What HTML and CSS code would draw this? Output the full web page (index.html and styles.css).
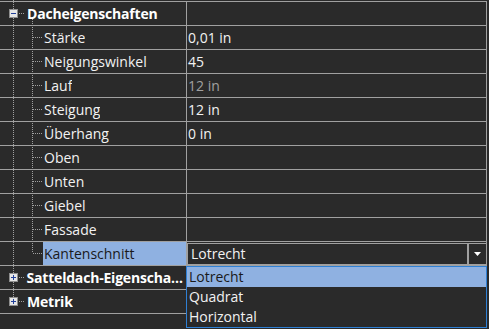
FILE: index.html
```html
<!DOCTYPE html>
<html lang="de">
<head>
    <meta charset="UTF-8">
    <title>Eigenschaften</title>
    <link rel="stylesheet" href="styles.css">
</head>
<body>
    <div class="grid">
        <div class="row group">
            <div class="name">
                <svg class="box" width="9" height="9" viewBox="0 0 9 9"><rect x=".5" y=".5" width="8" height="8" fill="#e6e6e6" stroke="#8e8e8e"/><path d="M2 4.5h5" stroke="#22409a"/></svg>
                <span class="twig short"></span>
                <span class="label">Dacheigenschaften</span>
            </div>
            <div class="value"></div>
        </div>
        <div class="row">
            <div class="name"><span class="twig"></span><span class="label">Stärke</span></div>
            <div class="value">0,01 in</div>
        </div>
        <div class="row">
            <div class="name"><span class="twig"></span><span class="label">Neigungswinkel</span></div>
            <div class="value">45</div>
        </div>
        <div class="row">
            <div class="name"><span class="twig"></span><span class="label">Lauf</span></div>
            <div class="value readonly">12 in</div>
        </div>
        <div class="row">
            <div class="name"><span class="twig"></span><span class="label">Steigung</span></div>
            <div class="value">12 in</div>
        </div>
        <div class="row">
            <div class="name"><span class="twig"></span><span class="label">Überhang</span></div>
            <div class="value">0 in</div>
        </div>
        <div class="row">
            <div class="name"><span class="twig"></span><span class="label">Oben</span></div>
            <div class="value"></div>
        </div>
        <div class="row">
            <div class="name"><span class="twig"></span><span class="label">Unten</span></div>
            <div class="value"></div>
        </div>
        <div class="row">
            <div class="name"><span class="twig"></span><span class="label">Giebel</span></div>
            <div class="value"></div>
        </div>
        <div class="row">
            <div class="name"><span class="twig"></span><span class="label">Fassade</span></div>
            <div class="value"></div>
        </div>
        <div class="row">
            <div class="name"><span class="twig"></span><span class="label selected">Kantenschnitt</span></div>
            <div class="value">
                <div class="combo">
                    <div class="combo-text">Lotrecht</div>
                    <div class="combo-btn">
                        <svg width="7" height="4" viewBox="0 0 7 4"><path d="M0 0h7L3.5 4z" fill="#ffffff"/></svg>
                    </div>
                </div>
            </div>
        </div>
        <div class="row group">
            <div class="name">
                <svg class="box" width="9" height="9" viewBox="0 0 9 9"><rect x=".5" y=".5" width="8" height="8" fill="#e6e6e6" stroke="#8e8e8e"/><path d="M2 4.5h5M4.5 2v5" stroke="#22409a"/></svg>
                <span class="twig short"></span>
                <span class="label">Satteldach-Eigenschaften</span>
            </div>
            <div class="value"></div>
        </div>
        <div class="row group">
            <div class="name">
                <svg class="box" width="9" height="9" viewBox="0 0 9 9"><rect x=".5" y=".5" width="8" height="8" fill="#e6e6e6" stroke="#8e8e8e"/><path d="M2 4.5h5M4.5 2v5" stroke="#22409a"/></svg>
                <span class="twig short"></span>
                <span class="label">Metrik</span>
            </div>
            <div class="value"></div>
        </div>
        <div class="row end"></div>

        <!-- offene Auswahlliste von Kantenschnitt -->
        <ul class="dropdown">
            <li class="active">Lotrecht</li>
            <li>Quadrat</li>
            <li>Horizontal</li>
        </ul>
    </div>
</body>
</html>
```

FILE: styles.css
```css
html, body {
    height: 100%;
}
body {
    margin: 0;
    background-color: #2a2a2a;
    color: #f2f2f2;
    font-family: "Open Sans", "Noto Sans", sans-serif;
    font-size: 14px;
}
.grid {
    position: relative;
    width: 487px;
    height: 100%;
    box-sizing: border-box;
    padding-top: 1px;
    background:
        repeating-linear-gradient(to bottom, #a0a0a0 0 1px, transparent 1px 2px) 13px 0 / 1px 297px no-repeat,
        repeating-linear-gradient(to bottom, #a0a0a0 0 1px, transparent 1px 2px) 32px 19px / 1px 234px no-repeat;
}
.row {
    display: flex;
    height: 23px;
    border-top: 1px solid #a0a0a0;
}
.row.end {
    height: 0;
}
.name {
    display: flex;
    align-items: center;
    width: 186px;
    border-right: 1px solid #a0a0a0;
    white-space: nowrap;
    overflow: hidden;
}
.value {
    flex: 1;
    display: flex;
    align-items: center;
    padding-left: 1px;
    border-right: 1px solid #a0a0a0;
    line-height: 23px;
}
.readonly {
    color: #a0a0a0;
}
.twig {
    width: 10px;
    height: 1px;
    margin-left: 33px;
    background: repeating-linear-gradient(to right, #a0a0a0 0 1px, transparent 1px 2px);
}
.twig.short {
    width: 6px;
    margin-left: 1px;
    margin-right: 1px;
}
.box {
    flex-shrink: 0;
    margin-left: 9px;
}
.label {
    padding-left: 1px;
    line-height: 23px;
    overflow: hidden;
    text-overflow: ellipsis;
}
.group .label {
    font-weight: bold;
    color: #ffffff;
    letter-spacing: -0.2px;
}
.selected {
    flex: 1;
    background-color: #8fb1e1;
    color: #1a1a1a;
}
.combo {
    display: flex;
    flex: 1;
    height: 22px;
    margin-top: 1px;
    margin-left: -1px;
    align-self: flex-start;
}
.combo-text {
    flex: 1;
    border: 1px solid #a0a0a0;
    padding-left: 3px;
    line-height: 20px;
}
.combo-btn {
    display: flex;
    align-items: center;
    justify-content: center;
    width: 17px;
    border: 1px solid #a0a0a0;
    border-right: none;
}
.dropdown {
    position: absolute;
    left: 186px;
    top: 266px;
    width: 299px;
    margin: 0;
    padding: 0;
    list-style: none;
    border: 1px solid #2f80d4;
    background-color: #2a2a2a;
}
.dropdown li {
    height: 20px;
    line-height: 20px;
    padding-left: 2px;
}
.dropdown li.active {
    background-color: #8fb1e1;
    color: #1a1a1a;
}
```
